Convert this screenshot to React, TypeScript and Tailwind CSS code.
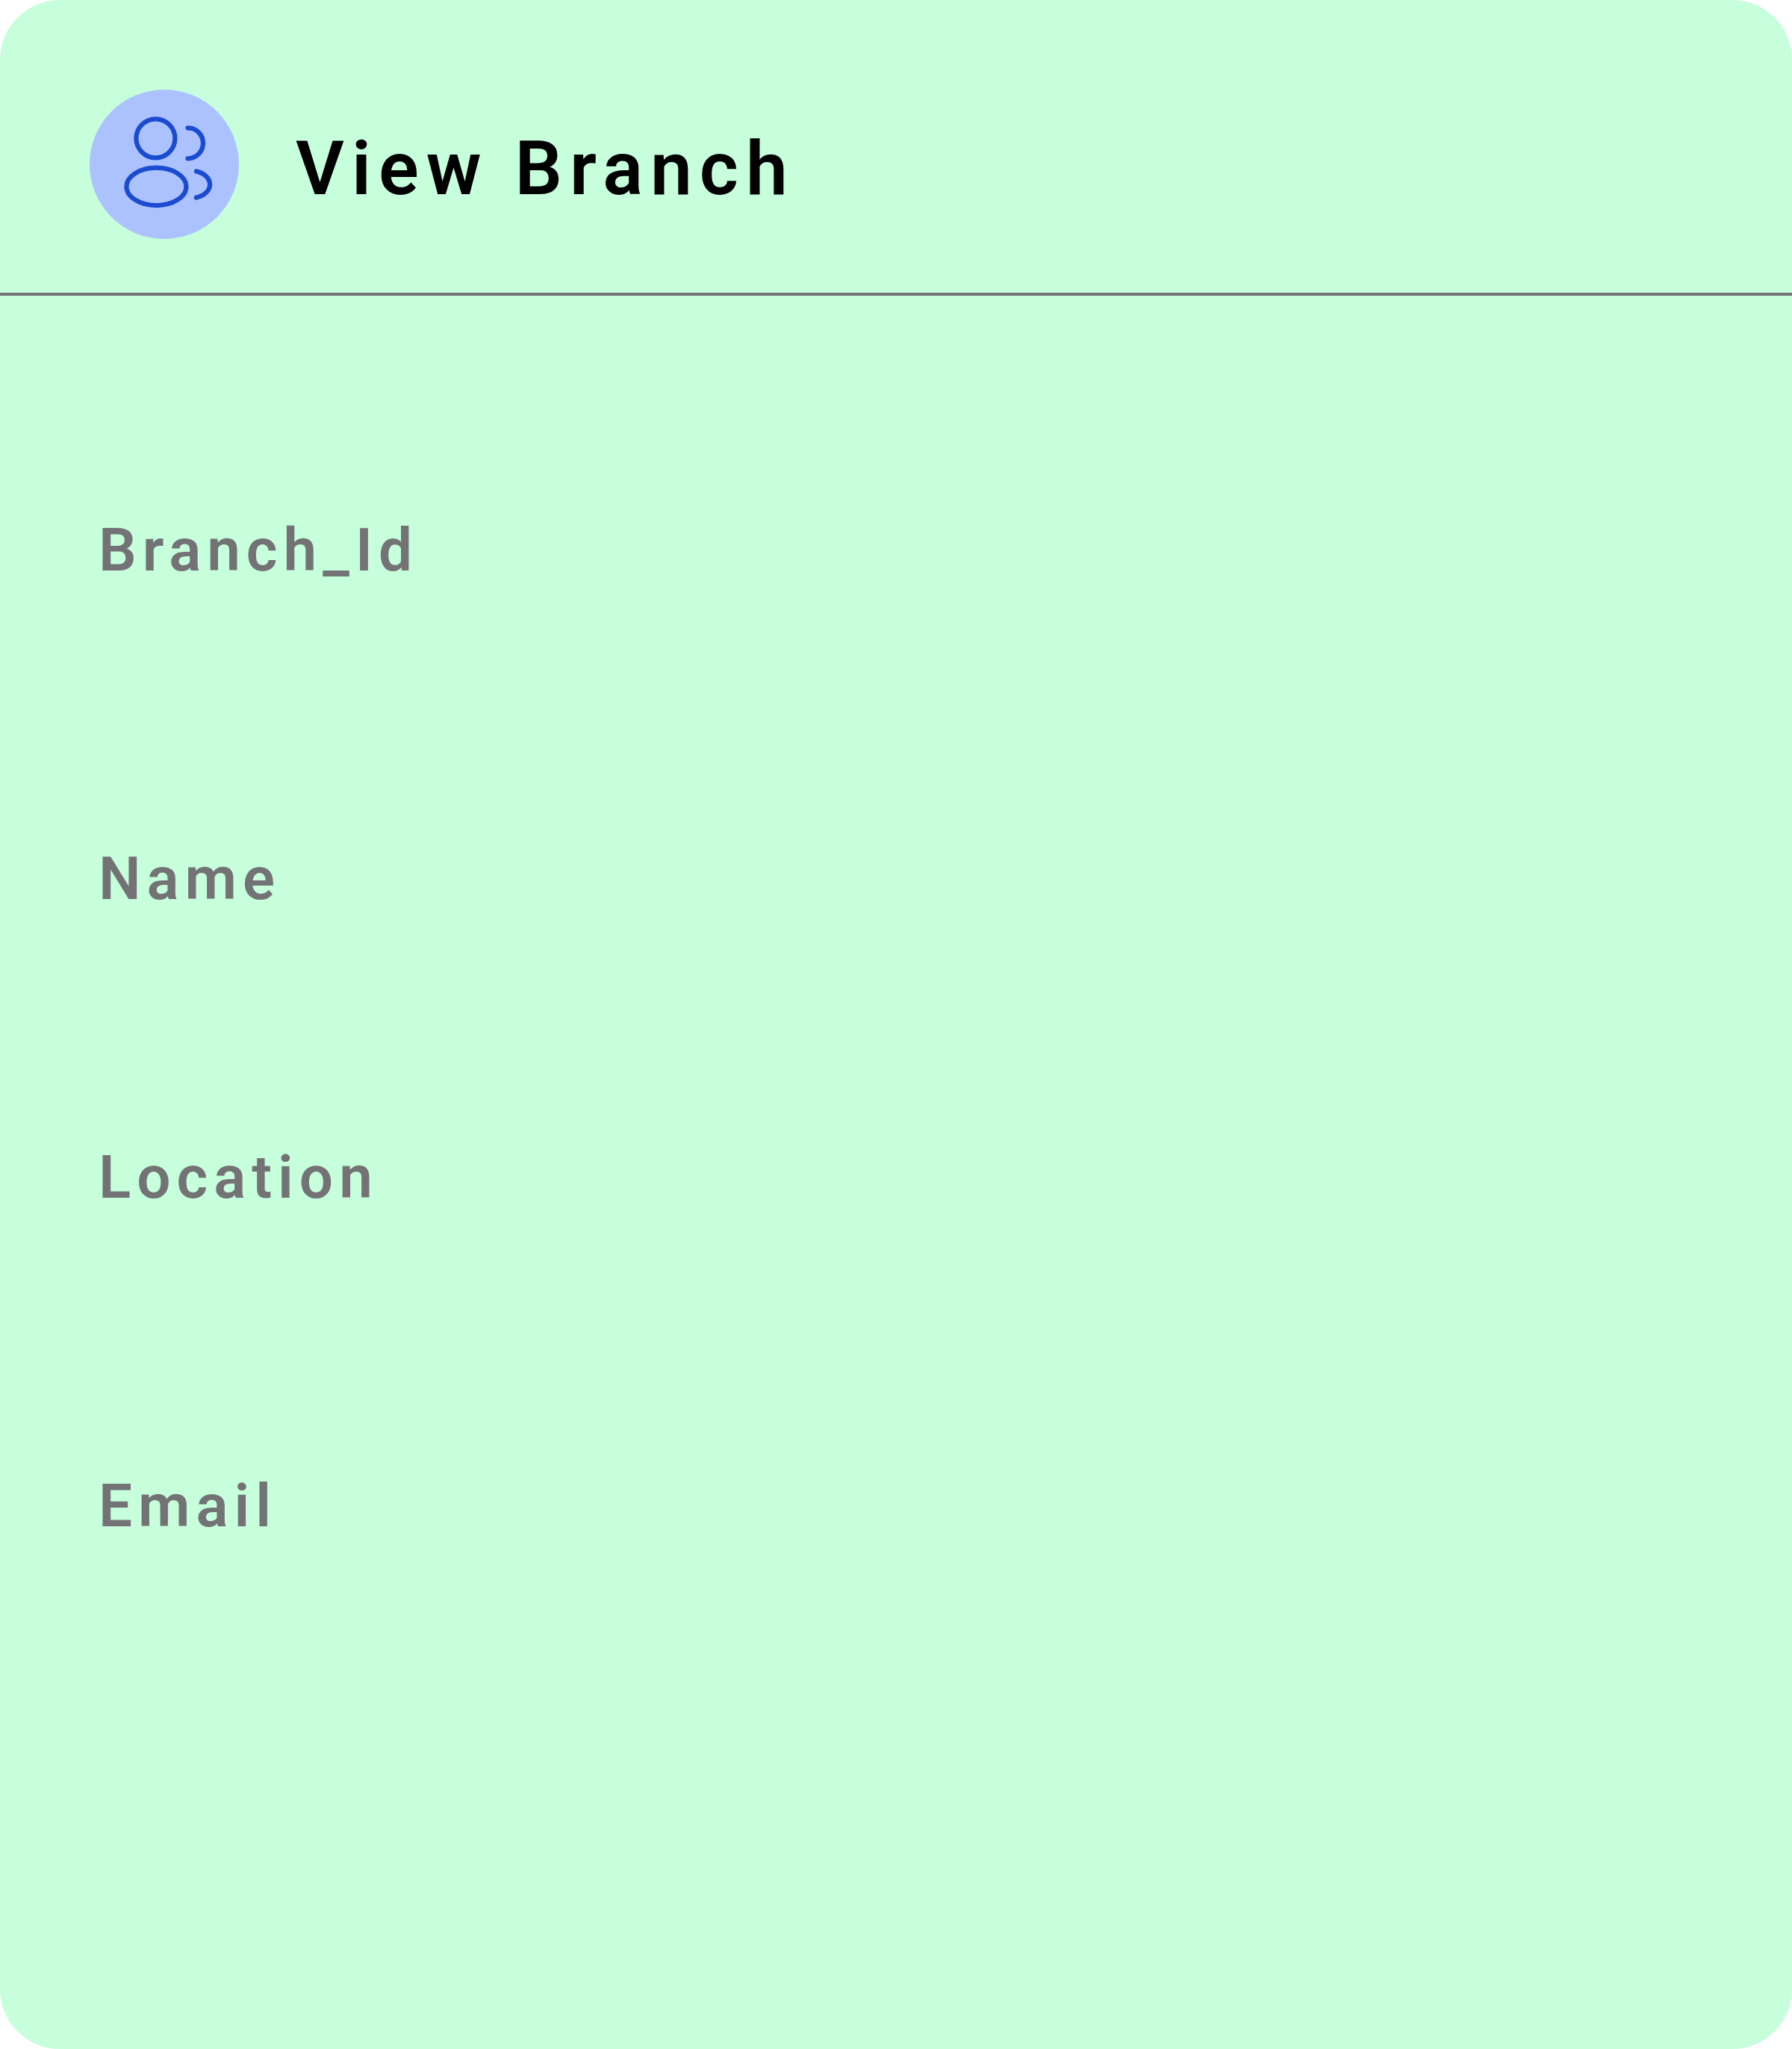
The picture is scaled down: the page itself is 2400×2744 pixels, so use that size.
import React from "react";

const fields = [
  { label: "Branch_Id", row: "h-[440px]" },
  { label: "Name", row: "h-[400px]" },
  { label: "Location", row: "h-[440px]" },
  { label: "Email", row: "h-[440px]" },
];

function UsersIcon() {
  return (
    <svg className="size-full" viewBox="0 0 200 200" fill="none" stroke="#1a4bd1" strokeWidth="6.25" strokeLinecap="round">
      <circle cx="88.4" cy="65.3" r="26" />
      <path d="M131.5 51.3a20.5 20.5 0 0 1 0 41" />
      <ellipse cx="89.4" cy="129.9" rx="40" ry="25.2" />
      <path d="M142.8 109.4c10.7 2.3 18.3 9.2 18.3 17.6s-7.6 15.3-18.3 17.6" />
    </svg>
  );
}

export default function App() {
  return (
    <main className="h-[2744px] w-[2400px] overflow-hidden rounded-[80px] bg-[#c7ffdd] font-['Roboto',sans-serif] font-semibold">
      <header className="flex h-[396px] items-start gap-[76px] border-b-4 border-[#737375] pt-[120px] pl-[120px]">
        <div className="size-[200px] rounded-full bg-[#abc2ff]">
          <UsersIcon />
        </div>
        <h1 className="mt-[47px] text-[100px] leading-[117px] tracking-[10px] text-black">View Branch</h1>
      </header>
      <section className="pt-[294px] pl-[132px]">
        {fields.map(({ label, row }) => (
          <div key={label} className={row}>
            <h2 className="text-[80px] leading-[94px] tracking-[8px] text-[#737375]">{label}</h2>
          </div>
        ))}
      </section>
    </main>
  );
}
